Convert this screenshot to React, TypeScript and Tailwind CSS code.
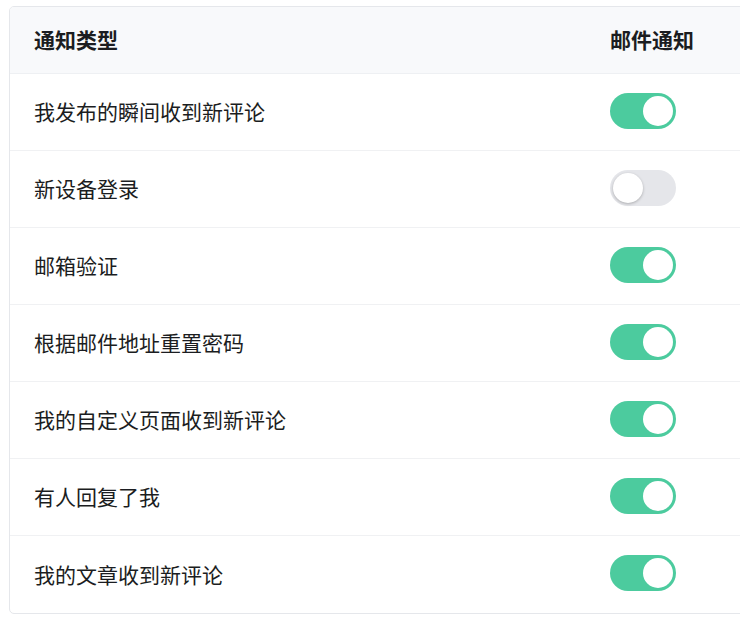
import React, { useState } from "react";

const rows: { label: string; on: boolean }[] = [
  { label: "我发布的瞬间收到新评论", on: true },
  { label: "新设备登录", on: false },
  { label: "邮箱验证", on: true },
  { label: "根据邮件地址重置密码", on: true },
  { label: "我的自定义页面收到新评论", on: true },
  { label: "有人回复了我", on: true },
  { label: "我的文章收到新评论", on: true },
];

function Toggle({ on, onClick }: { on: boolean; onClick: () => void }) {
  return (
    <button
      onClick={onClick}
      className={`mb-[3px] flex h-[36px] w-[66px] items-center rounded-full p-[3px] ${
        on ? "justify-end bg-[#4ccb9e]" : "justify-start bg-[#e5e6ea]"
      }`}
    >
      <span
        className={`block h-[30px] w-[30px] rounded-full bg-white ${
          on ? "" : "shadow-[0_1px_3px_rgba(0,0,0,0.25)]"
        }`}
      />
    </button>
  );
}

export default function App() {
  const [state, setState] = useState(rows.map((r) => r.on));
  return (
    <div
      className="h-[635px] w-[740px] overflow-hidden bg-white pl-[9px] pt-[6px]"
      style={{ fontFamily: '"Noto Sans CJK SC", "Noto Sans", sans-serif' }}
    >
      <div className="w-[780px] overflow-hidden rounded-[5px] border border-[#e5e7eb] text-[21px] text-[#1b1d21]">
        <div className="flex h-[67px] items-center border-b border-[#eef0f3] bg-[#f8f9fb] font-bold">
          <div className="w-[600px] pl-[24px]">通知类型</div>
          <div>邮件通知</div>
        </div>
        {rows.map((r, i) => (
          <div
            key={r.label}
            className={`flex h-[77px] items-center ${
              i < rows.length - 1 ? "border-b border-[#f0f1f3]" : ""
            }`}
          >
            <div className="w-[600px] pl-[24px]">{r.label}</div>
            <Toggle
              on={state[i]}
              onClick={() =>
                setState((s) => s.map((v, j) => (j === i ? !v : v)))
              }
            />
          </div>
        ))}
      </div>
    </div>
  );
}
